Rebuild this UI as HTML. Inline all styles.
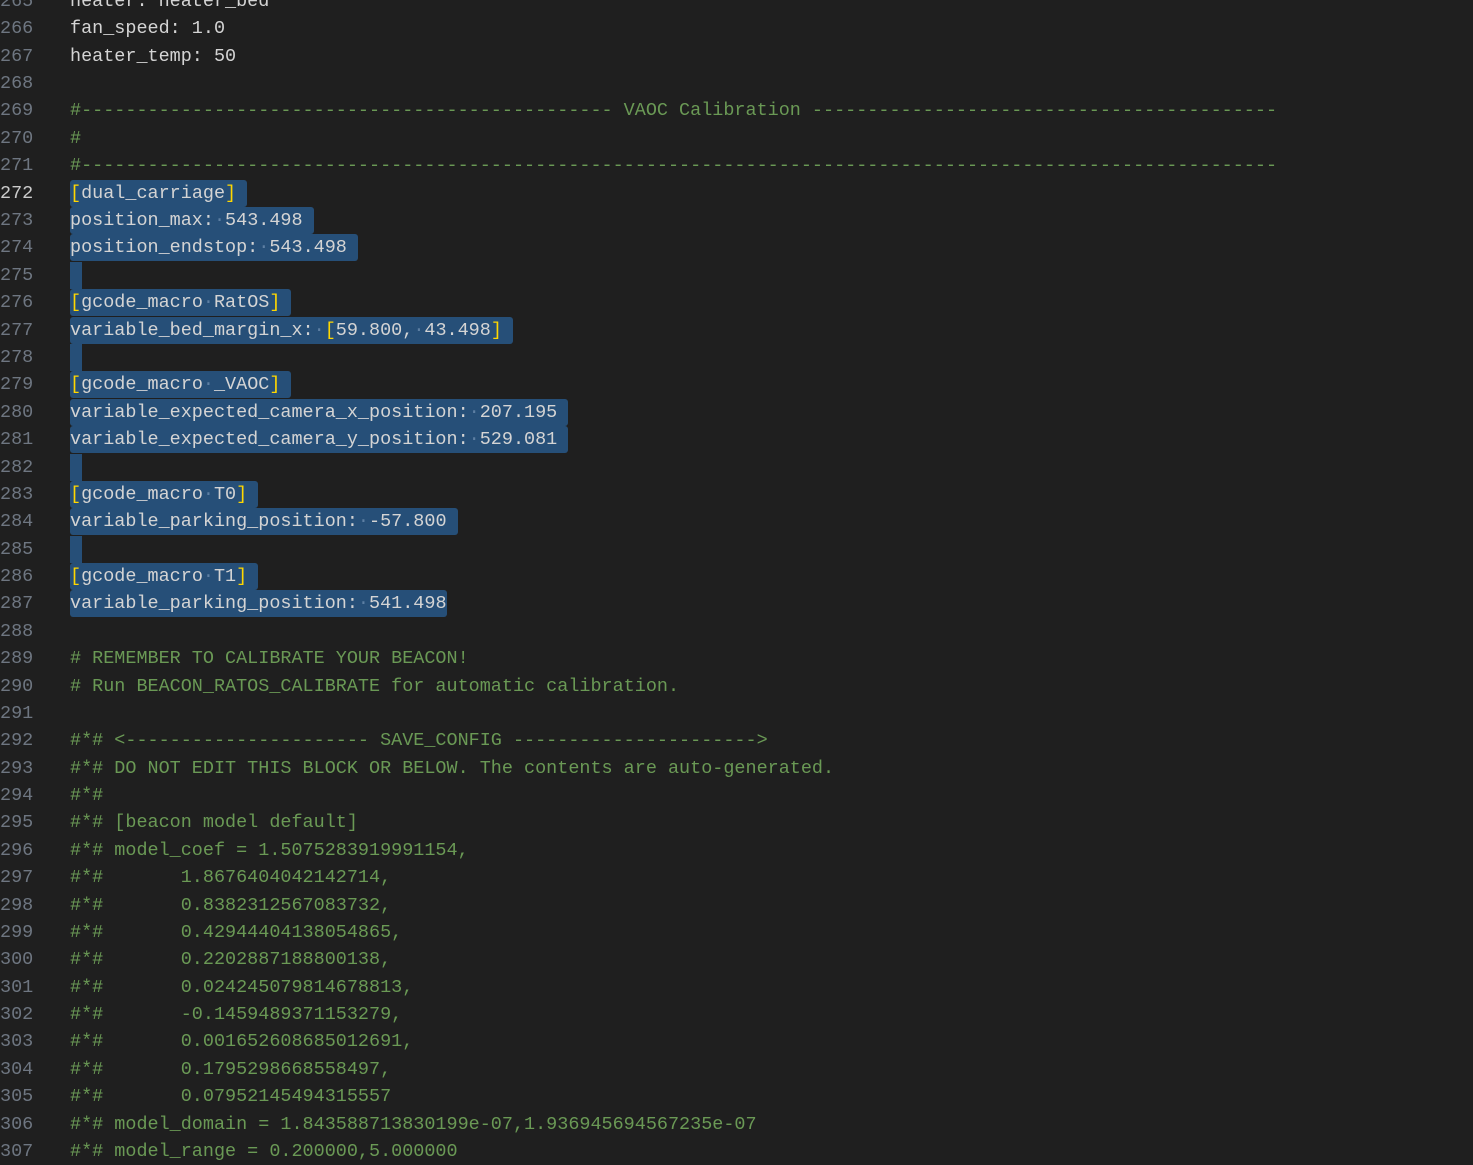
<!DOCTYPE html>
<html><head><meta charset="utf-8"><style>
html,body{margin:0;padding:0;background:#1f1f1f;width:1473px;height:1151px;overflow:hidden}
.l{position:absolute;left:0;height:27.4px;width:1473px;font-family:"Liberation Mono",monospace;font-size:18.47px;line-height:27.4px;white-space:pre;color:#d4d4d4;margin-top:2px}
.n{position:absolute;left:0;width:33px;text-align:right;color:#6e7681}
.n.a{color:#cccccc}
.t{position:absolute;left:70px;top:0}
.c{color:#6a9955}
.s{display:inline-block;height:27.4px;vertical-align:top;background:#264f78;padding-right:11px;border-radius:3px}
.b{color:#ffd700}
.d{color:#5d7fa3}
.e{display:inline-block;width:12px;height:27.4px;background:#264f78;vertical-align:top}
</style></head><body>
<div class="l" style="top:-14px"><span class="n">265</span><span class="t">heater: heater_bed</span></div>
<div class="l" style="top:13px"><span class="n">266</span><span class="t">fan_speed: 1.0</span></div>
<div class="l" style="top:41px"><span class="n">267</span><span class="t">heater_temp: 50</span></div>
<div class="l" style="top:68px"><span class="n">268</span></div>
<div class="l" style="top:95px"><span class="n">269</span><span class="t c">#------------------------------------------------ VAOC Calibration ------------------------------------------</span></div>
<div class="l" style="top:123px"><span class="n">270</span><span class="t c">#</span></div>
<div class="l" style="top:150px"><span class="n">271</span><span class="t c">#------------------------------------------------------------------------------------------------------------</span></div>
<div class="l" style="top:178px"><span class="n a">272</span><span class="t"><span class="s"><span class="b">[</span>dual_carriage<span class="b">]</span></span></span></div>
<div class="l" style="top:205px"><span class="n">273</span><span class="t"><span class="s">position_max:<span class="d">·</span>543.498</span></span></div>
<div class="l" style="top:232px"><span class="n">274</span><span class="t"><span class="s">position_endstop:<span class="d">·</span>543.498</span></span></div>
<div class="l" style="top:260px"><span class="n">275</span><span class="t"><span class="e"></span></span></div>
<div class="l" style="top:287px"><span class="n">276</span><span class="t"><span class="s"><span class="b">[</span>gcode_macro<span class="d">·</span>RatOS<span class="b">]</span></span></span></div>
<div class="l" style="top:315px"><span class="n">277</span><span class="t"><span class="s">variable_bed_margin_x:<span class="d">·</span><span class="b">[</span>59.800,<span class="d">·</span>43.498<span class="b">]</span></span></span></div>
<div class="l" style="top:342px"><span class="n">278</span><span class="t"><span class="e"></span></span></div>
<div class="l" style="top:369px"><span class="n">279</span><span class="t"><span class="s"><span class="b">[</span>gcode_macro<span class="d">·</span>_VAOC<span class="b">]</span></span></span></div>
<div class="l" style="top:397px"><span class="n">280</span><span class="t"><span class="s">variable_expected_camera_x_position:<span class="d">·</span>207.195</span></span></div>
<div class="l" style="top:424px"><span class="n">281</span><span class="t"><span class="s">variable_expected_camera_y_position:<span class="d">·</span>529.081</span></span></div>
<div class="l" style="top:452px"><span class="n">282</span><span class="t"><span class="e"></span></span></div>
<div class="l" style="top:479px"><span class="n">283</span><span class="t"><span class="s"><span class="b">[</span>gcode_macro<span class="d">·</span>T0<span class="b">]</span></span></span></div>
<div class="l" style="top:506px"><span class="n">284</span><span class="t"><span class="s">variable_parking_position:<span class="d">·</span>-57.800</span></span></div>
<div class="l" style="top:534px"><span class="n">285</span><span class="t"><span class="e"></span></span></div>
<div class="l" style="top:561px"><span class="n">286</span><span class="t"><span class="s"><span class="b">[</span>gcode_macro<span class="d">·</span>T1<span class="b">]</span></span></span></div>
<div class="l" style="top:588px"><span class="n">287</span><span class="t"><span class="s" style="padding-right:0">variable_parking_position:<span class="d">·</span>541.498</span></span></div>
<div class="l" style="top:616px"><span class="n">288</span></div>
<div class="l" style="top:643px"><span class="n">289</span><span class="t c"># REMEMBER TO CALIBRATE YOUR BEACON!</span></div>
<div class="l" style="top:671px"><span class="n">290</span><span class="t c"># Run BEACON_RATOS_CALIBRATE for automatic calibration.</span></div>
<div class="l" style="top:698px"><span class="n">291</span></div>
<div class="l" style="top:725px"><span class="n">292</span><span class="t c">#*# &lt;---------------------- SAVE_CONFIG ----------------------&gt;</span></div>
<div class="l" style="top:753px"><span class="n">293</span><span class="t c">#*# DO NOT EDIT THIS BLOCK OR BELOW. The contents are auto-generated.</span></div>
<div class="l" style="top:780px"><span class="n">294</span><span class="t c">#*#</span></div>
<div class="l" style="top:807px"><span class="n">295</span><span class="t c">#*# [beacon model default]</span></div>
<div class="l" style="top:835px"><span class="n">296</span><span class="t c">#*# model_coef = 1.5075283919991154,</span></div>
<div class="l" style="top:862px"><span class="n">297</span><span class="t c">#*#       1.8676404042142714,</span></div>
<div class="l" style="top:890px"><span class="n">298</span><span class="t c">#*#       0.8382312567083732,</span></div>
<div class="l" style="top:917px"><span class="n">299</span><span class="t c">#*#       0.42944404138054865,</span></div>
<div class="l" style="top:944px"><span class="n">300</span><span class="t c">#*#       0.2202887188800138,</span></div>
<div class="l" style="top:972px"><span class="n">301</span><span class="t c">#*#       0.024245079814678813,</span></div>
<div class="l" style="top:999px"><span class="n">302</span><span class="t c">#*#       -0.1459489371153279,</span></div>
<div class="l" style="top:1026px"><span class="n">303</span><span class="t c">#*#       0.001652608685012691,</span></div>
<div class="l" style="top:1054px"><span class="n">304</span><span class="t c">#*#       0.1795298668558497,</span></div>
<div class="l" style="top:1081px"><span class="n">305</span><span class="t c">#*#       0.07952145494315557</span></div>
<div class="l" style="top:1109px"><span class="n">306</span><span class="t c">#*# model_domain = 1.843588713830199e-07,1.936945694567235e-07</span></div>
<div class="l" style="top:1136px"><span class="n">307</span><span class="t c">#*# model_range = 0.200000,5.000000</span></div>
</body></html>
